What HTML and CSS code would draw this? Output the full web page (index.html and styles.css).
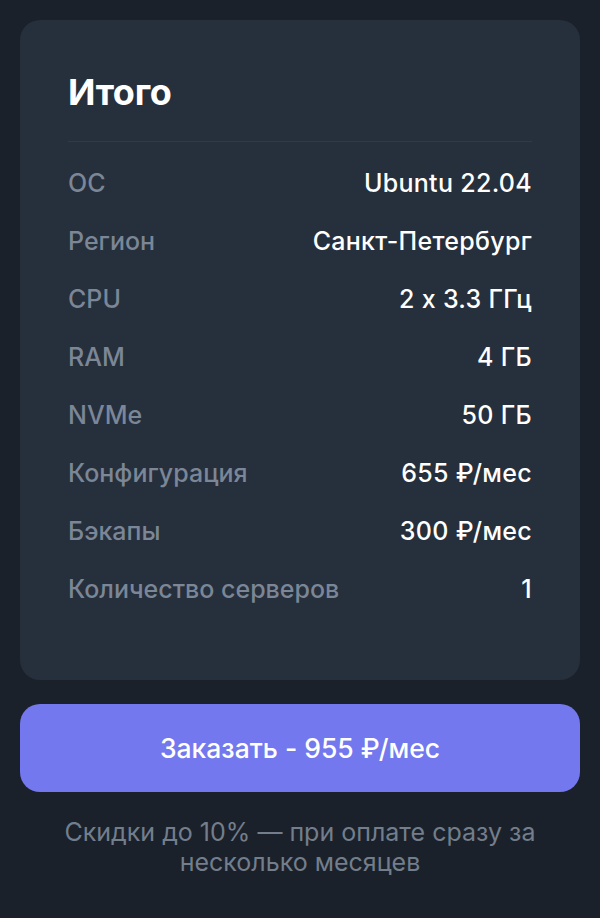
FILE: index.html
```html
<!DOCTYPE html>
<html lang="ru">
<head>
<meta charset="utf-8">
<title>Итого</title>
<link rel="stylesheet" href="styles.css">
</head>
<body>
<main class="page">
  <section class="card">
    <h2 class="title">Итого</h2>
    <dl class="rows">
      <div class="row"><dt>ОС</dt><dd>Ubuntu 22.04</dd></div>
      <div class="row"><dt>Регион</dt><dd>Санкт-Петербург</dd></div>
      <div class="row"><dt>CPU</dt><dd>2 x 3.3 ГГц</dd></div>
      <div class="row"><dt>RAM</dt><dd>4 ГБ</dd></div>
      <div class="row"><dt>NVMe</dt><dd>50 ГБ</dd></div>
      <div class="row"><dt>Конфигурация</dt><dd>655 ₽/мес</dd></div>
      <div class="row"><dt>Бэкапы</dt><dd>300 ₽/мес</dd></div>
      <div class="row"><dt>Количество серверов</dt><dd>1</dd></div>
    </dl>
  </section>
  <button class="order" type="button">Заказать - 955 ₽/мес</button>
  <p class="note">Скидки до 10% — при оплате сразу за несколько месяцев</p>
</main>
</body>
</html>
```
FILE: styles.css
```css
html, body {
  margin: 0;
  padding: 0;
  background: #1b212a;
}
body {
  font-family: Inter, "Noto Sans", sans-serif;
  font-feature-settings: "calt" 0;
  color: #ffffff;
}
.page {
  padding: 20px 20px 0;
  display: flex;
  flex-direction: column;
}
.card {
  background: #262f3c;
  border-radius: 20px;
  padding: 50px 48px 76px;
}
.title {
  margin: 0;
  font-size: 36px;
  line-height: 44px;
  font-weight: 700;
  letter-spacing: -0.3px;
  padding-bottom: 27px;
  border-bottom: 1px solid #313a47;
}
.rows {
  margin: 26px 0 0;
  display: flex;
  flex-direction: column;
  gap: 28px;
}
.row {
  display: flex;
  justify-content: space-between;
  align-items: center;
  font-size: 25px;
  line-height: 30px;
  font-weight: 500;
}
.row dt {
  color: #7b8696;
}
.row dd {
  margin: 0;
  color: #ffffff;
  letter-spacing: 0.3px;
}
.order {
  margin-top: 24px;
  height: 88px;
  border: 0;
  border-radius: 20px;
  background: #7378ee;
  color: #ffffff;
  font-family: inherit;
  font-feature-settings: "calt" 0;
  font-size: 26.5px;
  font-weight: 500;
}
.note {
  margin: 25px 0 0;
  padding: 0 20px;
  text-align: center;
  color: #737e8c;
  font-size: 25px;
  line-height: 30px;
  font-weight: 400;
}
```
